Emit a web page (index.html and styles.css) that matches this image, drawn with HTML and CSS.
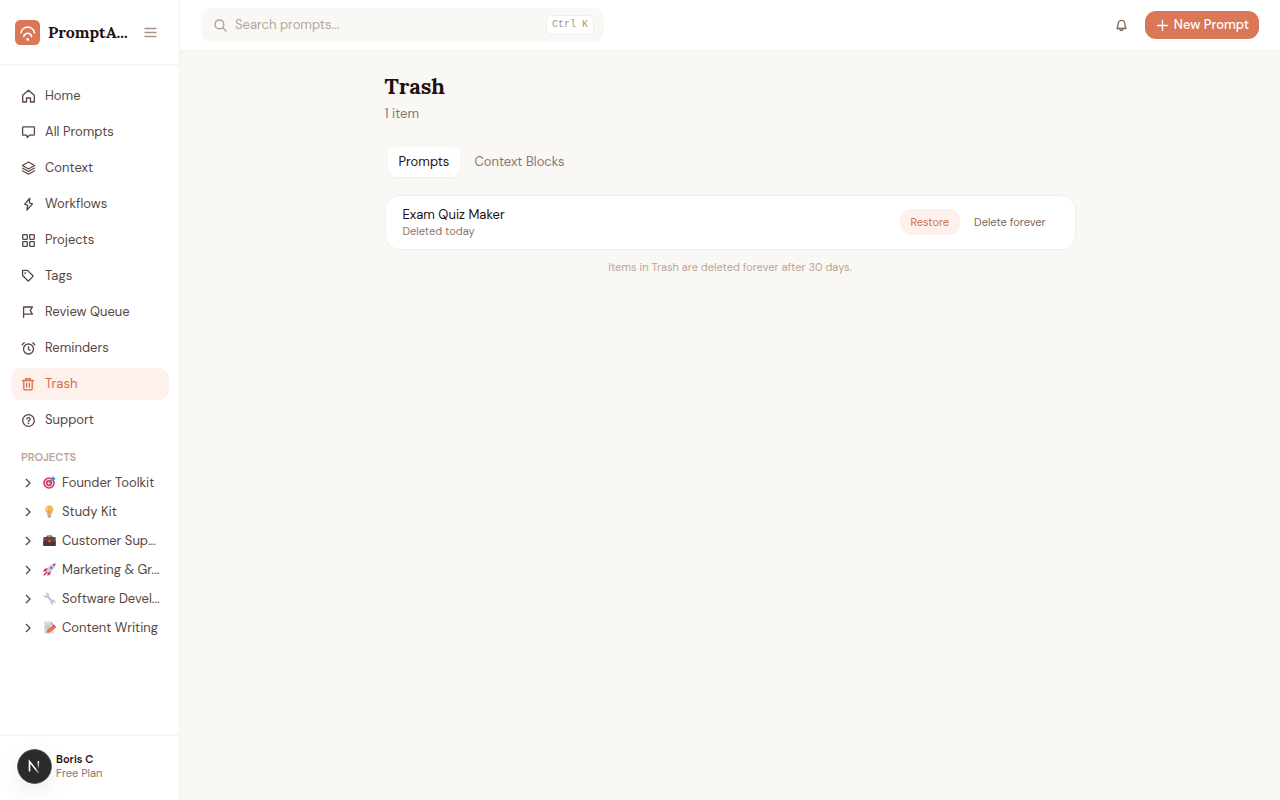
FILE: index.html
```html
<!DOCTYPE html>
<html lang="en">
<head>
    <meta charset="UTF-8">
    <meta name="viewport" content="width=device-width, initial-scale=1.0">
    <title>Trash</title>
    <link rel="stylesheet" href="styles.css">
</head>
<body>
    <aside class="sidebar">
        <div class="brand">
            <svg class="logo" viewBox="0 0 24 24">
                <rect width="24" height="24" rx="5" fill="#da7756"/>
                <g fill="none" stroke="#fff" stroke-width="1.5" stroke-linecap="round">
                    <path d="M5.6 12.4a6.7 6.7 0 0 1 13.2 0"/>
                    <path d="M8.4 15.8a3.9 3.9 0 0 1 7.6 0"/>
                </g>
                <circle cx="12.2" cy="18.6" r="1.3" fill="#fff"/>
            </svg>
            <span class="brand-name">PromptA...</span>
            <button class="icon-btn" aria-label="Toggle sidebar">
                <svg class="icon menu-icon" viewBox="0 0 15 15"><path d="M2 3.5h11M2 7.5h11M2 11.5h11"/></svg>
            </button>
        </div>

        <nav class="nav">
            <a href="#" class="nav-item">
                <svg class="icon" viewBox="0 0 15 15"><path d="M1.7 6.2 7.5 1.2l5.8 5V13H9.5V9h-4v4H1.7z"/></svg>
                Home
            </a>
            <a href="#" class="nav-item">
                <svg class="icon" viewBox="0 0 15 15"><path d="M2.4 1.8h10.2q.8 0 .8.8v6.8q0 .8-.8.8H8.6L6.2 12.6 5.8 10.2H2.4q-.8 0-.8-.8V2.6q0-.8.8-.8z"/></svg>
                All Prompts
            </a>
            <a href="#" class="nav-item">
                <svg class="icon thin" viewBox="0 0 15 15"><path d="m1.4 4.4 6.1-3.5 6.1 3.5-6.1 3.5zM1.4 7.1l6.1 3.5 6.1-3.5M1.4 9.8l6.1 3.5 6.1-3.5"/></svg>
                Context
            </a>
            <a href="#" class="nav-item">
                <svg class="icon" viewBox="0 0 15 15"><path d="m8.8 1.2-5 6 2.9 1.1-.8 4.8 5.6-6.2-3.1-1.1z"/></svg>
                Workflows
            </a>
            <a href="#" class="nav-item">
                <svg class="icon" viewBox="0 0 15 15"><rect x="1.7" y="1.7" width="4.6" height="4.6" rx=".5"/><rect x="8.7" y="1.7" width="4.6" height="4.6" rx=".5"/><rect x="1.7" y="8.7" width="4.6" height="4.6" rx=".5"/><rect x="8.7" y="8.7" width="4.6" height="4.6" rx=".5"/></svg>
                Projects
            </a>
            <a href="#" class="nav-item">
                <svg class="icon" viewBox="0 0 15 15"><path d="M1.6 1.4h4.9l5.4 5.4q.4.4 0 .8l-4.2 4.2q-.4.4-.8 0L1.6 6.5z"/><circle class="dot" cx="4.2" cy="4.1" r=".9"/></svg>
                Tags
            </a>
            <a href="#" class="nav-item">
                <svg class="icon" viewBox="0 0 15 15"><path d="M2.6 12.4V2h8.8L9.3 5.6l2.1 3.6H2.6"/></svg>
                Review Queue
            </a>
            <a href="#" class="nav-item">
                <svg class="icon" viewBox="0 0 15 15"><circle cx="7.5" cy="8" r="5"/><path d="M7.5 5.6V8l1.4 1.2M1.2 3.7l2-1.9M13.8 3.7l-2-1.9"/></svg>
                Reminders
            </a>
            <a href="#" class="nav-item active" aria-current="page">
                <svg class="icon" viewBox="0 0 15 15"><path d="M1.6 3.5h10.8M4.7 3.3V1.6h4.6v1.7M2.8 3.6v8.4q0 .8.8.8h6.8q.8 0 .8-.8V3.6M5.6 6v4.2M8.4 6v4.2"/></svg>
                Trash
            </a>
            <a href="#" class="nav-item">
                <svg class="icon" viewBox="0 0 15 15"><circle cx="7.5" cy="7.5" r="5.8"/><path d="M5.9 6.1a1.6 1.5 0 1 1 2.4 1.3q-.8.4-.8 1.1"/><circle class="dot" cx="7.5" cy="10.4" r=".8"/></svg>
                Support
            </a>
        </nav>

        <h2 class="section-label">PROJECTS</h2>
        <nav class="projects" aria-label="Projects">
            <a href="#" class="project">
                <svg class="chevron" viewBox="0 0 10 10"><path d="m3 1 4 4-4 4"/></svg>
                <svg class="emoji" viewBox="0 0 13 13">
                    <circle cx="6" cy="7" r="5.8" fill="#d6365f"/>
                    <circle cx="6" cy="7" r="4.3" fill="#f3d9e4"/>
                    <circle cx="6" cy="7" r="3.1" fill="#d6365f"/>
                    <circle cx="6" cy="7" r="1.5" fill="#f3d9e4"/>
                    <path d="m6 7 4-4" stroke="#33689e" stroke-width="1"/>
                    <path d="M7.8 5.2 7.9 2.4 10.5 0l.5 1.8 1.9.6-2.5 2.7z" fill="#3f95dc"/>
                </svg>
                <span>Founder Toolkit</span>
            </a>
            <a href="#" class="project">
                <svg class="chevron" viewBox="0 0 10 10"><path d="m3 1 4 4-4 4"/></svg>
                <svg class="emoji" viewBox="0 0 13 13">
                    <path d="M6.3.3a4.1 4.1 0 0 1 3 6.9L8.4 9.4H4.2L3.3 7.2a4.1 4.1 0 0 1 3-6.9z" fill="#f6b84c"/>
                    <path d="M5 2a2.3 2.3 0 0 0-1.1 2.8" fill="none" stroke="#ffe5a3" stroke-width="1"/>
                    <path d="M5.4 5.5 6.3 9l.9-3.5" fill="none" stroke="#d98b2b" stroke-width=".7"/>
                    <path d="M4.6 9.4H8v2.2L7 12.8H5.6l-1-1.2z" fill="#a9a3b4"/>
                </svg>
                <span>Study Kit</span>
            </a>
            <a href="#" class="project">
                <svg class="chevron" viewBox="0 0 10 10"><path d="m3 1 4 4-4 4"/></svg>
                <svg class="emoji" viewBox="0 0 13 13">
                    <path d="M4.2 3.4V2h4.6v1.4" fill="none" stroke="#4c2f30" stroke-width="1"/>
                    <rect x=".3" y="3" width="12.4" height="9" rx="1" fill="#6d4140"/>
                    <path d="M.3 7.2h12.4V11q0 1-1 1H1.3q-1 0-1-1z" fill="#563132"/>
                    <rect x="5.5" y="6.3" width="2" height="2" fill="#ef7a3c"/>
                </svg>
                <span>Customer Sup...</span>
            </a>
            <a href="#" class="project">
                <svg class="chevron" viewBox="0 0 10 10"><path d="m3 1 4 4-4 4"/></svg>
                <svg class="emoji" viewBox="0 0 13 13">
                    <path d="M5.2 4.8 1.2 6 .3 8.8l3.6-.6zM8.2 7.8 7 11.8l-2.8.9.6-3.6z" fill="#d93a62"/>
                    <path d="M3.3 7.8C4.9 4 7.3 1.5 10.8.8l1.4 1.4C11.5 5.7 9 8.1 5.2 9.7z" fill="#d0cddd"/>
                    <path d="M9.4 1.5Q11 .5 12.7.3q-.2 1.7-1.2 3.3z" fill="#d93a62"/>
                    <circle cx="8.3" cy="4.7" r="1.2" fill="#397fbe"/>
                    <path d="M3.6 8.4 4.6 9.4 1.6 12.4.4 12.6l.2-1.2z" fill="#c4304f"/>
                </svg>
                <span>Marketing &amp; Gr...</span>
            </a>
            <a href="#" class="project">
                <svg class="chevron" viewBox="0 0 10 10"><path d="m3 1 4 4-4 4"/></svg>
                <svg class="emoji" viewBox="0 0 13 13">
                    <path d="M.8 2.6 2.6 3.8 3.8 3.2 3.9 1.6 2.4.7a3 3 0 0 1 3.6 3.9l3.2 3.2a3 3 0 0 1 3.5 3.6l-1.4-1.3-1.5.3-.3 1.4 1.2 1.1a3 3 0 0 1-3.2-3.8L4.3 5.9A3 3 0 0 1 .8 2.6z" fill="#c6c2d0"/>
                </svg>
                <span>Software Devel...</span>
            </a>
            <a href="#" class="project">
                <svg class="chevron" viewBox="0 0 10 10"><path d="m3 1 4 4-4 4"/></svg>
                <svg class="emoji" viewBox="0 0 13 13">
                    <path d="M1.2.6h6.6L11 3.8v8.8H1.2z" fill="#dcd9e4"/>
                    <path d="M7.8.6 11 3.8H7.8z" fill="#aaa5b5"/>
                    <path d="M2.8 4.8h4M2.8 6.8h4M2.8 8.8h2" stroke="#aaa5b5" stroke-width=".7"/>
                    <path d="m4 9.2 5.6-4.6 2.4 2.6-5.4 4.4-3 .4z" fill="#ee7041"/>
                    <path d="m9.6 4.6 1.2-1 2.2 2.6-1 1z" fill="#c93c5a"/>
                </svg>
                <span>Content Writing</span>
            </a>
        </nav>

        <div class="user">
            <svg class="avatar" viewBox="0 0 35 35">
                <defs>
                    <linearGradient id="fade" x1="0" y1="0" x2="0" y2="1">
                        <stop offset=".2" stop-color="#fff"/>
                        <stop offset="1" stop-color="#fff" stop-opacity="0"/>
                    </linearGradient>
                    <linearGradient id="fade-leg" x1="0" y1="0" x2="1" y2="1">
                        <stop offset=".6" stop-color="#fff"/>
                        <stop offset="1" stop-color="#fff" stop-opacity=".2"/>
                    </linearGradient>
                </defs>
                <circle cx="17.5" cy="17.5" r="17" fill="#2d2a2b" stroke="#5a5657"/>
                <path d="M12.5 22.5v-10l9.2 11.6" fill="none" stroke="url(#fade-leg)" stroke-width="1.6"/>
                <rect x="20.6" y="12" width="1.5" height="8" fill="url(#fade)"/>
            </svg>
            <div class="user-info">
                <div class="user-name">Boris C</div>
                <div class="user-plan">Free Plan</div>
            </div>
        </div>
    </aside>

    <div class="page">
        <header class="topbar">
            <label class="search">
                <svg class="icon search-icon" viewBox="0 0 15 15"><circle cx="6.4" cy="6.4" r="4.4"/><path d="m9.7 9.7 3.3 3.3"/></svg>
                <input type="text" placeholder="Search prompts..." aria-label="Search prompts">
                <kbd>Ctrl K</kbd>
            </label>
            <div class="actions">
                <button class="icon-btn" aria-label="Notifications">
                    <svg class="icon bell" viewBox="0 0 15 15"><path d="M4.1 6.2a3.4 3.9 0 0 1 6.8 0c0 2 .5 3.3 1.1 4.3H3c.6-1 1.1-2.3 1.1-4.3zM5.9 10.8a1.6 1.9 0 0 0 3.2 0"/></svg>
                </button>
                <button class="new-btn">
                    <svg class="icon" viewBox="0 0 15 15"><path d="M7.5 2.5v10M2.5 7.5h10"/></svg>
                    New Prompt
                </button>
            </div>
        </header>

        <main class="content">
            <h1>Trash</h1>
            <p class="count">1 item</p>
            <div class="tabs">
                <button class="tab selected">Prompts</button>
                <button class="tab">Context Blocks</button>
            </div>
            <div class="card">
                <div class="card-text">
                    <div class="card-title">Exam Quiz Maker</div>
                    <div class="card-date">Deleted today</div>
                </div>
                <button class="small-btn restore">Restore</button>
                <button class="small-btn">Delete forever</button>
            </div>
            <p class="note">Items in Trash are deleted forever after 30 days.</p>
        </main>
    </div>
</body>
</html>
```

FILE: styles.css
```css
* {
    box-sizing: border-box;
}

body {
    margin: 0;
    display: flex;
    min-height: 100vh;
    font-family: "DM Sans", Inter, sans-serif;
    font-size: 13px;
    line-height: 20px;
    color: #57463f;
    background-color: #faf8f5;
}

a {
    color: inherit;
    text-decoration: none;
}

button,
input {
    font: inherit;
    color: inherit;
    border: none;
    background: none;
    padding: 0;
}

.icon {
    width: 15px;
    height: 15px;
    flex-shrink: 0;
    fill: none;
    stroke: currentColor;
    stroke-width: 1.3;
    stroke-linejoin: round;
    stroke-linecap: round;
}

.icon.thin {
    stroke-width: 1.1;
}

.icon .dot {
    fill: currentColor;
    stroke: none;
}

.icon-btn {
    display: flex;
}

/* sidebar */
.sidebar {
    width: 180px;
    flex-shrink: 0;
    display: flex;
    flex-direction: column;
    background-color: #fff;
    border-right: 1px solid #f3f2f1;
}

.brand {
    height: 66px;
    display: flex;
    align-items: center;
    gap: 8px;
    padding: 0 21px 0 15px;
    border-bottom: 2px solid #f7f6f6;
}

.logo {
    width: 25px;
    height: 25px;
    flex-shrink: 0;
}

.brand-name {
    flex: 1;
    font-family: Lora, "Liberation Serif", serif;
    font-weight: bold;
    font-size: 16px;
    white-space: nowrap;
    color: #1f1210;
}

.menu-icon {
    color: #a89389;
}

.nav {
    display: flex;
    flex-direction: column;
    gap: 4px;
    padding: 14px 10px 0 11px;
}

.nav-item {
    display: flex;
    align-items: center;
    gap: 9px;
    height: 32px;
    padding: 0 10px;
    border-radius: 11px;
}

.nav-item.active {
    color: #d0704c;
    background-color: #fef0eb;
}

.section-label {
    margin: 11px 0 0 21px;
    font-size: 11px;
    font-weight: 600;
    color: #b8a49b;
}

.projects {
    padding: 1px 10px 0 23px;
}

.project {
    display: flex;
    align-items: center;
    height: 29px;
    white-space: nowrap;
}

.chevron {
    width: 10px;
    height: 10px;
    margin-right: 10px;
    flex-shrink: 0;
    fill: none;
    stroke: #57463f;
    stroke-width: 1.3;
}

.emoji {
    width: 13px;
    height: 13px;
    margin-right: 6px;
    flex-shrink: 0;
}

.user {
    display: flex;
    align-items: center;
    gap: 4px;
    height: 66px;
    margin-top: auto;
    padding: 0 17px 4px;
    border-top: 2px solid #f7f6f6;
    font-size: 11px;
    line-height: 14px;
}

.avatar {
    width: 35px;
    height: 35px;
    border-radius: 50%;
    box-shadow: 0 8px 24px rgba(0, 0, 0, 0.08);
}

.user-name {
    font-weight: 600;
    color: #1f1210;
}

.user-plan {
    color: #8c7468;
}

/* top bar */
.page {
    flex: 1;
    min-width: 0;
}

.topbar {
    display: flex;
    align-items: center;
    justify-content: space-between;
    height: 51px;
    padding: 0 21px;
    background-color: #fff;
    border-bottom: 1px solid #f3f2f1;
}

.search {
    display: flex;
    align-items: center;
    gap: 7px;
    width: 403px;
    height: 34px;
    padding: 0 10px 0 12px;
    border-radius: 11px;
    background-color: #faf8f5;
}

.search-icon {
    color: #b39f96;
    stroke-width: 1.4;
}

.search input {
    flex: 1;
    min-width: 0;
    outline: none;
}

.search input::placeholder {
    color: #b8a49b;
    opacity: 1;
}

kbd {
    padding: 0 5px;
    font-family: "Liberation Mono", monospace;
    font-size: 10px;
    line-height: 18px;
    color: #a89389;
    background-color: #fff;
    border: 1px solid #f0eeec;
    border-radius: 5px;
}

.actions {
    display: flex;
    align-items: center;
    gap: 16px;
}

.bell {
    color: #7a665c;
}

.new-btn {
    display: flex;
    align-items: center;
    gap: 4px;
    height: 28px;
    padding: 0 10px;
    border-radius: 11px;
    font-weight: 500;
    color: #fff;
    background-color: #da7756;
}

/* trash */
.content {
    max-width: 691px;
    margin: 0 auto;
    padding-top: 20px;
}

h1 {
    margin: 0;
    font-family: Lora, "Liberation Serif", serif;
    font-size: 22px;
    line-height: 30px;
    color: #1f1210;
}

.count {
    margin: 3px 0 0;
    color: #8c7468;
}

.tabs {
    display: flex;
    gap: 3px;
    margin-top: 23px;
    padding: 0 3px;
}

.tab {
    height: 30px;
    padding: 0 11px;
    border-radius: 8px;
    color: #8c7468;
}

.tab.selected {
    color: #1f1210;
    background-color: #fff;
    box-shadow: 0 1px 2px rgba(0, 0, 0, 0.05);
}

.card {
    display: flex;
    align-items: center;
    gap: 3px;
    height: 55px;
    margin-top: 18px;
    padding: 0 18px 2px 17px;
    background-color: #fff;
    border: 1px solid #f0efee;
    border-radius: 15px;
}

.card-text {
    flex: 1;
}

.card-title {
    line-height: 18px;
    color: #1f1210;
}

.card-date {
    font-size: 11px;
    line-height: 14px;
    color: #8c7468;
}

.small-btn {
    height: 26px;
    padding: 0 11px;
    border-radius: 11px;
    font-size: 11px;
    color: #7a665c;
}

.small-btn.restore {
    color: #d0704c;
    background-color: #fef0eb;
}

.note {
    margin: 7px 0 0;
    font-size: 11px;
    text-align: center;
    color: #b8a49b;
}
```
